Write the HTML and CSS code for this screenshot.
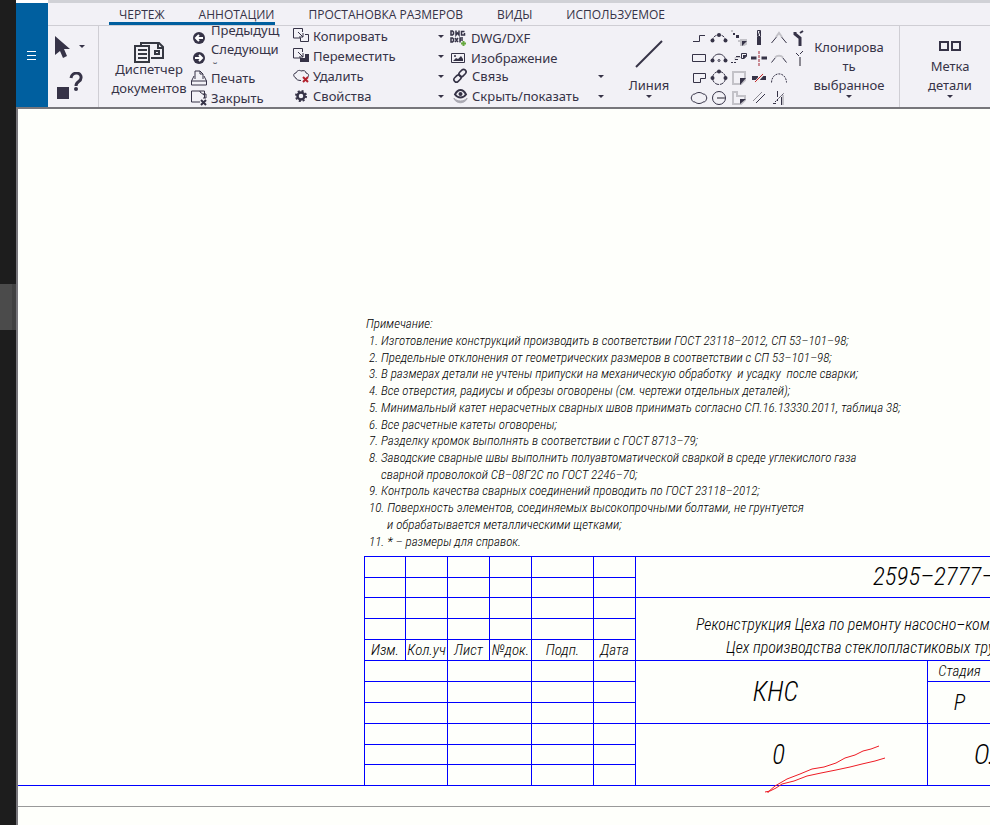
FILE: index.html
```html
<!DOCTYPE html>
<html lang="ru">
<head>
<meta charset="utf-8">
<title>Чертеж</title>
<link rel="stylesheet" href="styles.css">
</head>
<body>
<div class="app">
  <aside class="edge"><div class="edge-thumb"></div></aside>
  <div class="main">
    <div class="titlebar"><span class="titlebar-corner"></span></div>
    <header class="top">
      <button class="menu" aria-label="Меню"><svg width="10" height="9" viewBox="0 0 10 9"><path d="M0 .5h9M0 4.5h9M0 8.5h9" stroke="#fff"/></svg></button>
      <div class="top-body">
        <nav class="tabs">
          <div class="tabs-active"><a href="#">ЧЕРТЕЖ</a><a href="#">АННОТАЦИИ</a></div>
          <a href="#">ПРОСТАНОВКА РАЗМЕРОВ</a><a href="#">ВИДЫ</a><a href="#">ИСПОЛЬЗУЕМОЕ</a>
        </nav>
        <div class="ribbon">
          <div class="group select">
            <button class="pointer" aria-label="Выбор"><svg width="34" height="24" viewBox="0 0 34 24"><path d="M1 0v19l5-4 3 7 4-2-3-7h6z" fill="#363347"/><path d="M25 9h6l-3 3z" fill="#363347"/></svg></button>
            <button class="help" aria-label="Справка"><svg width="30" height="28" viewBox="0 0 30 28"><path d="M3 15h12v12H3z" fill="#363347"/><path d="M17 6c1-7 11-6 10 0 0 4-5 3-5 8" fill="none" stroke="#363347" stroke-width="3"/><circle cx="22" cy="17" r="2" fill="#363347"/></svg></button>
          </div>
          <button class="big docs"><svg width="30" height="21" viewBox="0 0 30 21" fill="none" stroke="#363842" stroke-width="2"><path d="M7 3V1h18l4 4v11H17M24 1v5h5"/><path d="M1 4h14v16H1zM4 8h9M4 12h9M4 16h9M21 9h4v3h-4z"/></svg><span>Диспетчер<br>документов</span></button>
          <div class="col files">
            <button class="row"><svg width="18" height="20" viewBox="0 0 18 20"><circle cx="8" cy="10" r="6" fill="#363347"/><path d="M12 10H5m3-3l-3 3 3 3" fill="none" stroke="#fff" stroke-width="2"/></svg><span class="first">Предыдущ</span></button>
            <button class="row"><svg width="18" height="20" viewBox="0 0 18 20"><circle cx="8" cy="10" r="6" fill="#363347"/><path d="M4 10h7M8 7l3 3-3 3" fill="none" stroke="#fff" stroke-width="2"/></svg><span class="second">Следующи<br>й</span></button>
            <button class="row"><svg width="18" height="20" viewBox="0 0 18 20" fill="none" stroke="#363347"><path d="M4 11V3h5l3 3v5M9 3v3h3M3 8L.5 13v4h15v-4L13 8M.5 13h15"/></svg><span>Печать</span></button>
            <button class="row"><svg width="18" height="20" viewBox="0 0 18 20" fill="none" stroke="#363347"><path d="M9 14H.5V3h13v7M9 3v1l4 3"/><path d="M12 6h3v4h-3"/><path d="M10 12l5 5m0-5l-5 5" stroke-width="2"/></svg><span>Закрыть</span></button>
          </div>
          <div class="col edit">
            <button class="row"><svg width="18" height="20" viewBox="0 0 18 20" fill="none" stroke="#363347"><path d="M8 12H.5V2.500h9V6M5 6l5 5M10 7v4H6"/><path d="M12 8.500h3.500v7h-8V12"/></svg><span>Копировать</span><i class="caret"></i></button>
            <button class="row"><svg width="18" height="20" viewBox="0 0 18 20" fill="none" stroke="#363347"><path d="M8 12H.5V2.500h9V6M5 6l5 5M10 7v4H6"/><path d="M12 8h4v8H7v-4h5z" fill="#363347" stroke="none"/></svg><span>Переместить</span><i class="caret"></i></button>
            <button class="row"><svg width="18" height="20" viewBox="0 0 18 20" fill="none" stroke="#363347"><path d="M8 14.500c-3 0-5-1-5-2.500-3-1-3-5 0-5 1-3 4-3 5-2 3-1 5 0 5 2 3 1 3 2 2 4"/><path d="M10 11l5 5m0-5l-5 5" stroke="#b3202c" stroke-width="2"/></svg><span>Удалить</span><i class="caret"></i></button>
            <button class="row"><svg width="18" height="20" viewBox="0 0 18 20" fill="none" stroke="#363347"><circle cx="8" cy="10" r="3.500" stroke-width="2.500"/><circle cx="8" cy="10" r="5" stroke-width="2" stroke-dasharray="2 1.930"/></svg><span>Свойства</span><i class="caret"></i></button>
          </div>
          <div class="col insert">
            <div class="lower">
            <button class="row"><svg width="18" height="20" viewBox="0 0 18 20" fill="none" stroke="#363347" stroke-width="1.500"><path d="M1 3v4h1.500l1-1V4l-1-1zM6 2.500V7l1.500-2L9 7V2.500M14.500 3.500H11.500V7h3V5M1 10v4h1.500l1-1v-2l-1-1zM5 10l3 4m0-4l-3 4M10 14.500V10h3M10 12h3"/><path d="M11 15.500h5M13.500 13v5" stroke="#66a83e" stroke-width="2"/></svg><span>DWG/DXF</span></button>
            <button class="row"><svg width="18" height="20" viewBox="0 0 18 20" fill="none" stroke="#363347"><path d="M1.500 5.500h13v9h-13z"/><path d="M3 13l3-3 2 1 3-3 2 3v2z" fill="#363347" stroke="none"/><circle cx="5" cy="8" r="1" fill="#363347" stroke="none"/></svg><span>Изображение</span></button>
            </div>
            <div class="upper">
            <button class="row"><svg width="18" height="20" viewBox="0 0 18 20" fill="none" stroke="#363347" stroke-width="1.600"><rect x="6.500" y="4.500" width="8" height="5" rx="2.500" transform="rotate(-45 10.500 7)"/><rect x="1.500" y="10" width="8" height="5" rx="2.500" transform="rotate(-45 5.500 12.500)"/></svg><span>Связь</span><i class="caret"></i></button>
            <button class="row"><svg width="18" height="20" viewBox="0 0 18 20" fill="none"><path d="M2 12c3 4 10 4 13 0v1c-3 5-10 5-13 0z" fill="#aaa9b2" stroke="#aaa9b2"/><path d="M3 8.500c3-6 8-6 11 0-3 4-8 4-11 0z" stroke="#363347" stroke-width="2"/><circle cx="8.500" cy="8" r="2" fill="#363347"/></svg><span>Скрыть/показать</span><i class="caret"></i></button>
            </div>
          </div>
          <button class="big line"><svg width="28" height="28" viewBox="0 0 28 28"><path d="M1 27L27 1" stroke="#363347" stroke-width="2"/></svg><span>Линия</span><i class="caret"></i></button>
          <div class="tools">
            <button aria-label="Ломаная"><svg viewBox="0 0 20 20"><path d="M4 13.500h6.500v-6H16"/></svg></button>
            <button aria-label="Дуга"><svg viewBox="0 0 20 20"><path d="M3.500 12.500C4 5 16 5 16.500 12.500" stroke-dasharray="3 1"/><g class="f"><circle cx="3.500" cy="12.500" r="2"/><circle cx="10" cy="7" r="2"/><circle cx="16.500" cy="12.500" r="2"/></g></svg></button>
            <button aria-label="Деталь по точкам"><svg viewBox="0 0 20 20"><path class="g" stroke-width="2" d="M2 3h2M9 13h2"/><path class="f" d="M4 5h2v2H4zM7 7h3v3H7z"/><path class="g" stroke-width="2" d="M12 12h5v4l-2 1h-3z"/><path class="f" d="M13 13h5l-5 5z"/></svg></button>
            <button aria-label="Колонна"><svg viewBox="0 0 20 20"><path d="M8.500 2.500h3v6h-3zM11 3L9 8"/><path class="f" d="M8 9h4v8H8z"/></svg></button>
            <button aria-label="Угол"><svg viewBox="0 0 20 20"><path d="M2.500 15l5-6M17.500 15l-5-6"/><path class="g" stroke-width="2" d="M7 9l3-4 3 4"/></svg></button>
            <button aria-label="Ветвь"><svg viewBox="0 0 20 20"><path stroke-width="3" d="M6 4v2l5 4v8"/><path stroke-width="2" d="M11 5l3-2"/></svg></button>

            <button aria-label="Прямоугольник"><svg viewBox="0 0 20 20"><path d="M3.500 6.500h13v7h-13z"/></svg></button>
            <button aria-label="Дуга по центру"><svg viewBox="0 0 20 20"><path d="M3.500 12.500C4 4 16 4 16.500 12.500"/><circle cx="10" cy="12.500" r="1"/><g class="f"><circle cx="3.500" cy="12.500" r="2"/><circle cx="16.500" cy="12.500" r="2"/></g></svg></button>
            <button aria-label="Ступень"><svg viewBox="0 0 20 20"><path d="M2 14.500h5" stroke-dasharray="2 1"/><path class="g" d="M6 12V9.500h6"/><path d="M6 11.500h3M7 8.500h4M12.500 5.500h5v3l-3 2h-2z"/><path class="f" d="M14 7h4l-3 4h-1z"/></svg></button>
            <button aria-label="Разрыв"><svg viewBox="0 0 20 20"><path stroke-width="3" d="M2 10h5.500M12.500 10H18"/><path stroke="#c98a93" stroke-width="2" stroke-dasharray="3 1" d="M10 3v15"/></svg></button>
            <button aria-label="Скос"><svg viewBox="0 0 20 20"><path d="M2.500 14.500l4-5M17.500 14.500l-4-5"/><path class="g" stroke-width="2" d="M6 9.500C8 7 12 7 14 9.500"/></svg></button>
            <button aria-label="Отвод"><svg viewBox="0 0 20 20"><path class="h" d="M11 9v9" stroke-width="2"/><path d="M7 5l3 3M11 6l3-3"/></svg></button>

            <button aria-label="Многоугольник"><svg viewBox="0 0 20 20"><path d="M4.500 5.500h12v5h-5v4h-7z"/></svg></button>
            <button aria-label="Окружность"><svg viewBox="0 0 20 20"><circle cx="10" cy="10" r="6.500" stroke-dasharray="4 1"/><g class="f"><circle cx="3.500" cy="10" r="2"/><circle cx="10" cy="3.500" r="2"/><circle cx="16.500" cy="10" r="2"/></g></svg></button>
            <button aria-label="Контур"><svg viewBox="0 0 20 20"><path class="g" stroke-width="2" d="M4 4h12v8l-4 4H4z"/><path class="f" d="M11 10h6l-6 7z"/></svg></button>
            <button aria-label="Разрез"><svg viewBox="0 0 20 20"><path stroke-width="4" d="M3 10h6M11 10h6"/><path stroke="#eee" stroke-width="3" d="M6 15l9-10"/><path stroke="#c7252d" d="M6 14l8-8"/></svg></button>
            <button aria-label="Пунктирная дуга"><svg viewBox="0 0 20 20"><path stroke-dasharray="2 1" d="M2.500 14.500C3 3 17 3 17.500 14.500"/></svg></button>
            <span></span>

            <button aria-label="Облако"><svg viewBox="0 0 20 20"><path d="M6 6c2-2 6-2 8 0 2 0 3 1 3 2 1 1 1 3 0 4 0 1-1 2-3 2-2 2-6 2-8 0-2 0-3-1-3-2-1-1-1-3 0-4 0-1 1-2 3-2z"/></svg></button>
            <button aria-label="Окружность по радиусу"><svg viewBox="0 0 20 20"><circle cx="10" cy="10" r="6.500"/><path stroke-width="2" class="h" d="M8 10h8"/></svg></button>
            <button aria-label="Вырез"><svg viewBox="0 0 20 20"><path class="g" stroke-width="2" d="M4 4h4v4h8v4l-4 4H4z"/><path class="f" d="M11 11h6l-6 5z"/></svg></button>
            <button aria-label="Параллель"><svg viewBox="0 0 20 20"><path class="h" d="M4 13l9-9"/><path d="M7 15l9-9"/></svg></button>
            <button aria-label="Обрезка"><svg viewBox="0 0 20 20"><path d="M8.500 3v6M8.500 11v2M12.500 9v8M4 15.500h3"/><path class="g" stroke-width="2" d="M14 7v10"/><path stroke-dasharray="2 1" d="M6 14l9-9"/></svg></button>
          </div>
          <button class="big clone"><span>Клонирова<br>ть<br>выбранное</span><i class="caret"></i></button>
          <div class="group last">
          <button class="big mark"><svg width="22" height="10" viewBox="0 0 22 10" fill="none" stroke="#363347" stroke-width="2"><path d="M1 1h8v8H1zM13 1h8v8h-8z"/></svg><span>Метка<br>детали</span><i class="caret"></i></button>
          </div>
        </div>
      </div>
    </header>
    <main class="canvas">
      <section class="sheet">
        <ol class="notes">
          <li class="head">Примечание:</li>
          <li>1. Изготовление конструкций производить в соответствии ГОСТ 23118–2012, СП 53–101–98;</li>
          <li>2. Предельные отклонения от геометрических размеров в соответствии с СП 53–101–98;</li>
          <li>3. В размерах детали не учтены припуски на механическую обработку&nbsp; и усадку&nbsp; после сварки;</li>
          <li>4. Все отверстия, радиусы и обрезы оговорены (см. чертежи отдельных деталей);</li>
          <li>5. Минимальный катет нерасчетных сварных швов принимать согласно СП.16.13330.2011, таблица 38;</li>
          <li>6. Все расчетные катеты оговорены;</li>
          <li>7. Разделку кромок выполнять в соответствии с ГОСТ 8713–79;</li>
          <li>8. Заводские сварные швы выполнить полуавтоматической сваркой в среде углекислого газа</li>
          <li class="cont">сварной проволокой СВ–08Г2С по ГОСТ 2246–70;</li>
          <li>9. Контроль качества сварных соединений проводить по ГОСТ 23118–2012;</li>
          <li>10. Поверхность элементов, соединяемых высокопрочными болтами, не грунтуется</li>
          <li class="cont deep">и обрабатывается металлическими щетками;</li>
          <li>11. * – размеры для справок.</li>
        </ol>
        <div class="stamp-wrap">
        <table class="stamp">
          <colgroup><col class="c1"><col class="c2"><col class="c2"><col class="c2"><col class="c5"><col class="c2"><col class="c7"><col></colgroup>
          <tr><td></td><td></td><td></td><td></td><td></td><td></td><td colspan="2" rowspan="2" class="number">2595–2777–</td></tr>
          <tr class="low"><td></td><td></td><td></td><td></td><td></td><td></td></tr>
          <tr><td></td><td></td><td></td><td></td><td></td><td></td><td colspan="2" rowspan="3" class="project"><p>Реконструкция Цеха по ремонту насосно–компр</p><p class="sub">Цех производства стеклопластиковых тру</p></td></tr>
          <tr><td></td><td></td><td></td><td></td><td></td><td></td></tr>
          <tr class="names"><th>Изм.</th><th>Кол.уч</th><th>Лист</th><th>№док.</th><th>Подп.</th><th>Дата</th></tr>
          <tr><td colspan="2"></td><td colspan="2"></td><td></td><td></td><td rowspan="3" class="code">КНС</td><th class="stage">Стадия</th></tr>
          <tr><td colspan="2"></td><td colspan="2"></td><td></td><td></td><td rowspan="2" class="phase">Р</td></tr>
          <tr><td colspan="2"></td><td colspan="2"></td><td></td><td></td></tr>
          <tr><td colspan="2"></td><td colspan="2"></td><td></td><td></td><td rowspan="3" class="zero">0<svg class="scribble" width="122" height="48" viewBox="0 0 122 48" fill="none" stroke="#ee1c25"><path d="M115 1l-8 3-8 2-8 4-10 3-9 5-12 4-12 2-12 5-13 5-12 7-7 6v2M121 13l-10 3-13 3-12 3-14 3-15 3-14 3-13 5-12 3-6 4-6 3-5 1"/></svg></td><td rowspan="3" class="firm">О.</td></tr>
          <tr class="low"><td colspan="2"></td><td colspan="2"></td><td></td><td></td></tr>
          <tr><td colspan="2"></td><td colspan="2"></td><td></td><td></td></tr>
        </table>
        </div>
      </section>
    </main>
  </div>
</div>
</body>
</html>
```
FILE: styles.css
```css
* { box-sizing: border-box; }
body { margin: 0; font-family: "Noto Sans", sans-serif; font-size: 13px; color: #363347; }
button { border: 0; padding: 0; margin: 0; background: none; font: inherit; color: inherit; }
svg { display: block; flex: none; }

.app { display: flex; height: 100vh; overflow: hidden; }
.edge { flex: 0 0 16px; background: #1d1d1d; padding-top: 284px; }
.edge-thumb { height: 46px; background: #4b4b4b; border-right: 4px solid #414141; }
.main { flex: 1; min-width: 0; display: flex; flex-direction: column; }
.titlebar { flex: 0 0 3px; background: #d0d1d6; display: flex; }
.titlebar-corner { width: 32px; background: #fff; }

.top { display: flex; background: #f2f1f6; }
.menu { flex: 0 0 32px; background: #005f9f; display: flex; align-items: center; justify-content: center; }
.top-body { flex: 1; min-width: 0; }
.tabs { display: flex; gap: 34px; height: 23px; border-bottom: 1px solid #cfced4; font-family: "Open Sans", sans-serif; font-size: 12px; line-height: 24px; padding-left: 61px; white-space: nowrap; }
.tabs-active { display: flex; gap: 34px; padding-left: 10px; height: 22px; border-bottom: 3px solid #005f9f; }
.tabs a { color: inherit; text-decoration: none; }

.ribbon { display: flex; height: 81px; overflow: hidden; white-space: nowrap; }
.select { flex: 0 0 51px; border-right: 1px solid #cfced4; padding: 10px 0 0 6px; display: flex; flex-direction: column; gap: 12px; }
.big { display: flex; flex-direction: column; align-items: center; flex: none; line-height: 19px; text-align: center; }
.caret { flex: none; width: 0; border: 3px solid transparent; border-top-color: #363347; border-bottom: 0; }
.docs { width: 80px; margin-left: 10px; padding-top: 16px; }
.docs svg { margin-bottom: -3px; }
.col { flex: none; }
.row { display: flex; align-items: center; width: 100%; height: 20px; text-align: left; }
.row span { margin-left: 2px; line-height: 18px; }
.row .caret { margin-left: auto; }
.files { width: 90px; margin-left: 2px; padding-top: 2px; }
.files .first { align-self: flex-start; margin-top: -7px; }
.files .second { align-self: flex-start; height: 24px; margin-top: -8px; overflow: hidden; }
.edit { width: 151px; margin-left: 12px; }
.insert { width: 154px; margin-left: 6px; }
.insert .lower { padding-top: 2px; }
.insert .lower span { margin-left: 3px; }
.insert .upper { margin-top: -2px; padding-left: 2px; }
.line { width: 40px; margin-left: 25px; padding-top: 14px; }
.line span { margin-top: 8px; }
.tools { flex: none; display: grid; grid-template-columns: repeat(6, 20px); grid-auto-rows: 20px; margin-left: 20px; padding-top: 2px; }
.tools svg { width: 20px; height: 20px; fill: none; stroke: #363347; }
.tools .f { fill: #363347; stroke: none; }
.tools .g { stroke: #c3c2c8; }
.tools .h { stroke: #8b8992; }
.clone { width: 80px; padding-top: 12px; }
.last { margin-left: 10px; border-left: 1px solid #cfced4; padding-left: 25px; }
.mark { width: 50px; padding-top: 15px; }
.mark span { margin-top: 6px; }

.canvas { flex: 1; min-height: 0; overflow: hidden; background: #fefffb; border-top: 2px solid #77767b; border-left: 2px solid #77767b; color: #000; font-family: "Roboto Condensed", "Roboto", sans-serif; font-style: italic; font-weight: 300; }
.sheet { padding: 207px 0 20px; border-bottom: 1px solid #999; }
.notes { display: grid; grid-auto-rows: 1fr; min-height: 234px; margin: 0 0 6px 351px; padding: 0; list-style: none; font-size: 13px; line-height: 16px; white-space: nowrap; align-items: center; }
.notes .head { margin-left: -3px; }
.notes .cont { padding-left: 12px; }
.notes .deep { padding-left: 18px; }
.stamp-wrap { border-bottom: 1px solid #00f; padding-left: 346px; }
.stamp { table-layout: fixed; width: calc(100% + 2px); border-collapse: collapse; margin-bottom: -1px; }
.stamp tr { height: 21px; }
.stamp .low { height: 20px; }
.stamp td, .stamp th { border: 1px solid #00f; padding: 0; font-weight: inherit; white-space: nowrap; text-align: center; line-height: 18px; }
.stamp .c1 { width: 41px; }
.stamp .c2 { width: 42px; }
.stamp .c5 { width: 62px; }
.stamp .c7 { width: 292px; }
.names th, .stamp .stage { font-size: 15px; }
.stamp .number { font-size: 25px; text-align: left; padding-left: 237px; line-height: 30px; }
.stamp .project { font-size: 16px; text-align: left; padding: 14px 0 0 60px; }
.project p { margin: 0; line-height: 23px; }
.project .sub { padding-left: 30px; }
.stamp .code, .stamp .zero, .stamp .firm { font-size: 27px; line-height: 32px; }
.stamp .code { padding-right: 12px; }
.stamp .phase { font-size: 22px; }
.stamp .firm { text-align: left; padding-left: 46px; }
.stamp .zero { position: relative; padding-right: 6px; }
.scribble { position: absolute; left: 128px; top: 21px; }
```
